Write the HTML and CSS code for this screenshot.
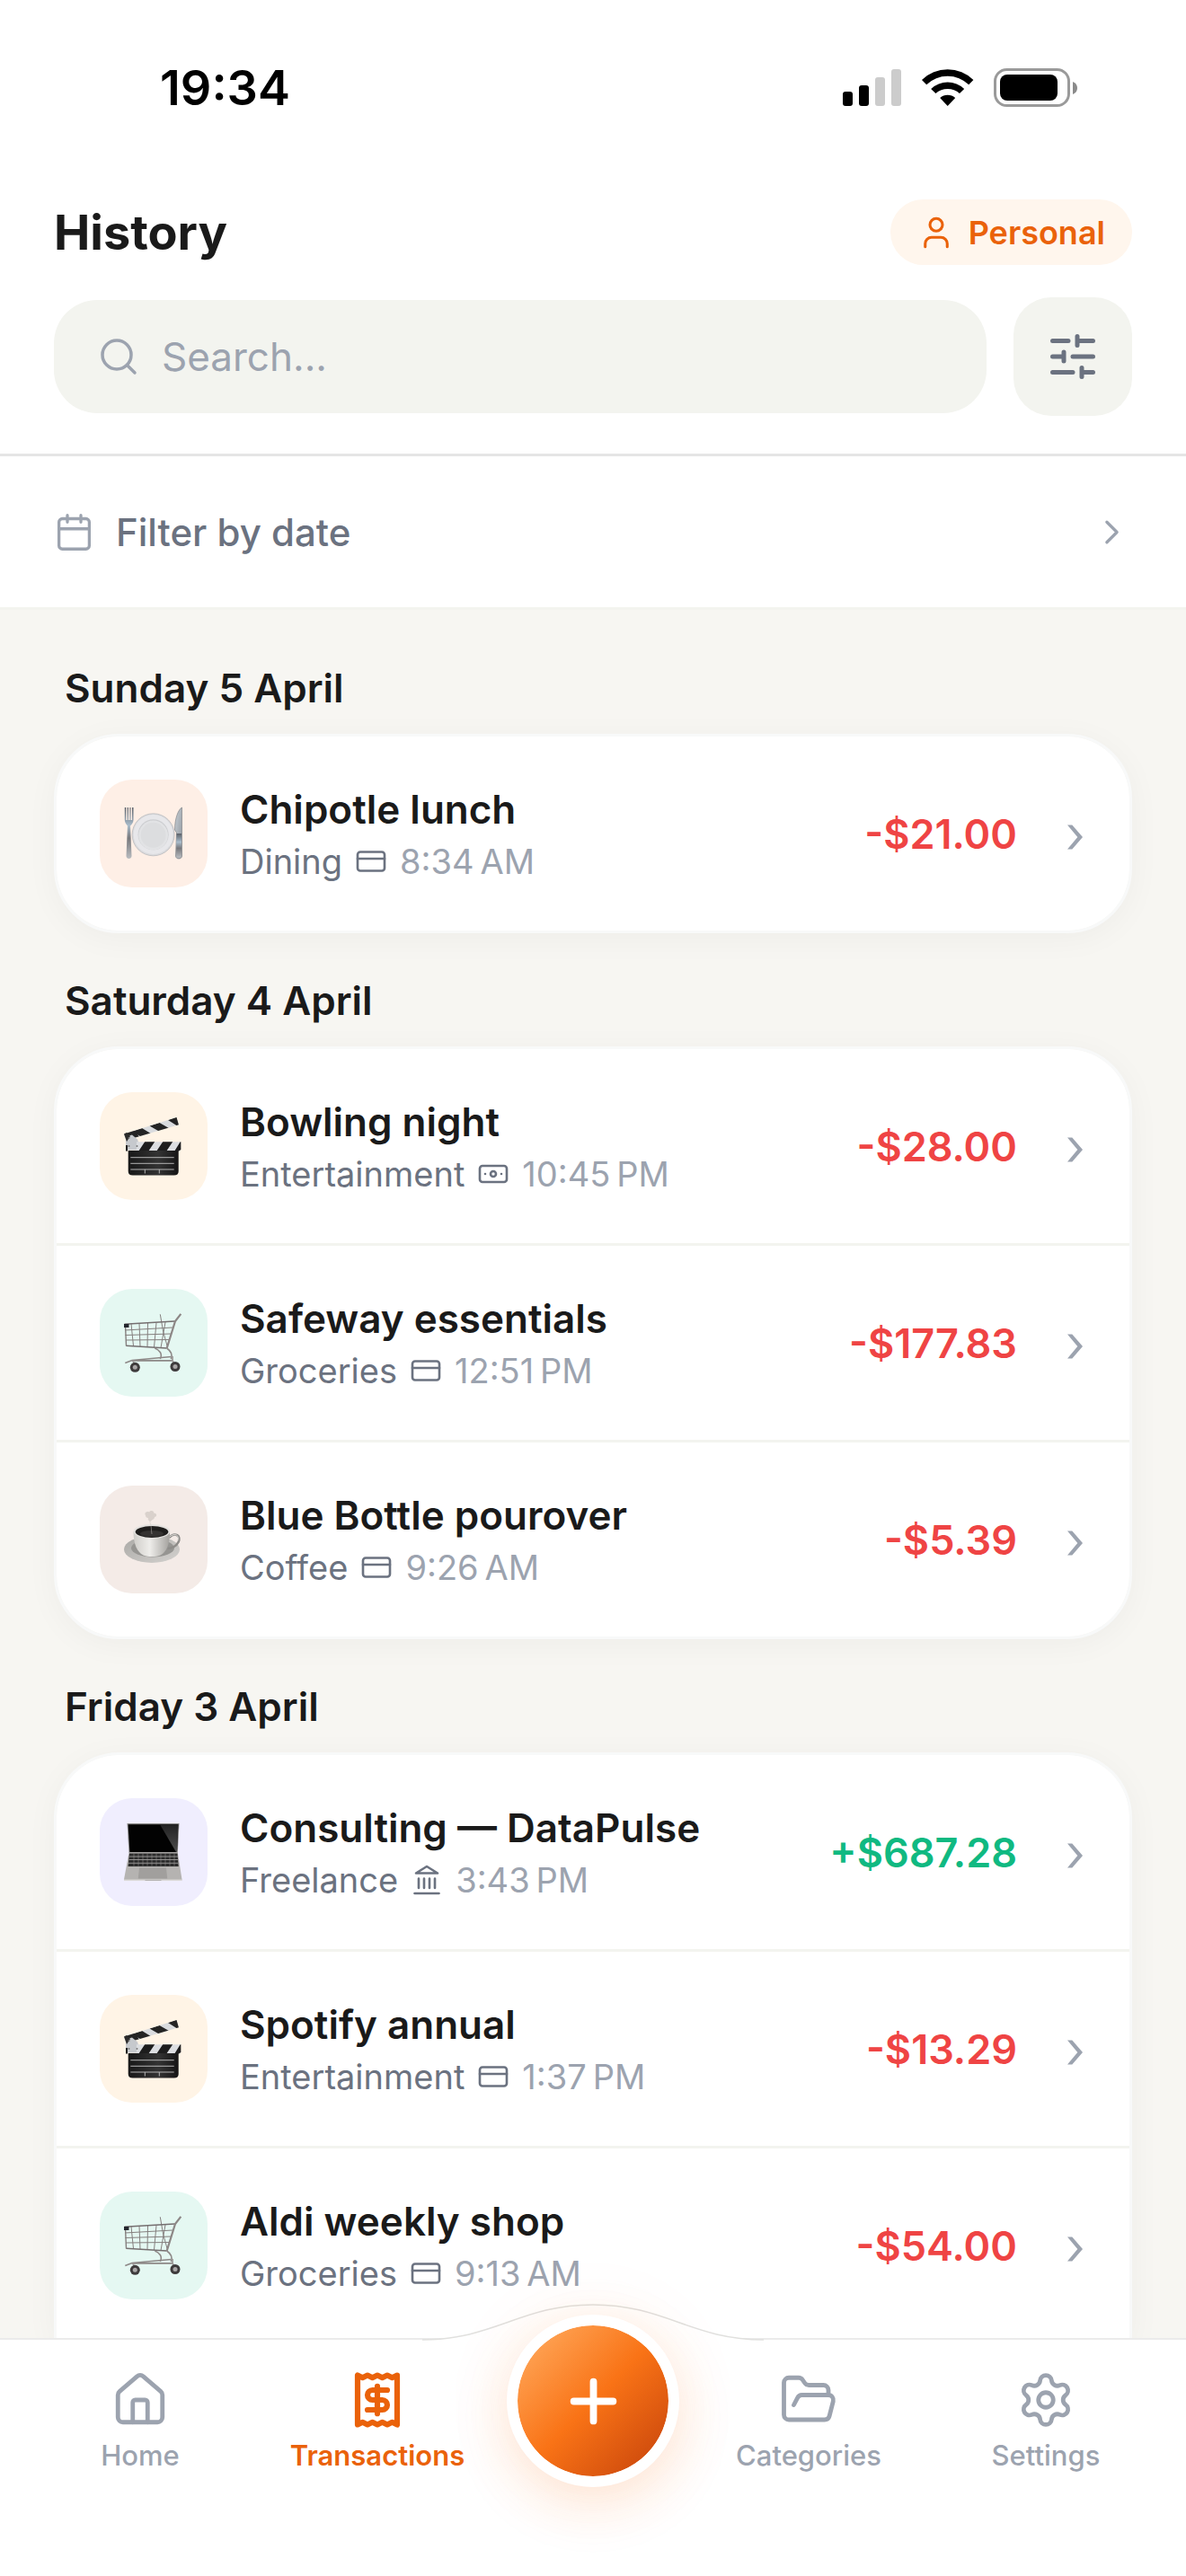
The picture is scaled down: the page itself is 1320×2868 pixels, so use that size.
FILE: index.html
```html
<!DOCTYPE html>
<html lang="en">
<head>
<meta charset="utf-8">
<meta name="viewport" content="width=device-width, initial-scale=1">
<title>History</title>
<link rel="stylesheet" href="styles.css">
</head>
<body>
<svg class="sprite" aria-hidden="true">
  <defs>
    <linearGradient id="steel" x1="0" y1="0" x2="0" y2="1"><stop offset="0" stop-color="#5b6068"/><stop offset=".35" stop-color="#a9bccb"/><stop offset=".6" stop-color="#77787c"/><stop offset="1" stop-color="#b9bcc0"/></linearGradient>
    <linearGradient id="blade" x1="0" y1="0" x2="1" y2="1"><stop offset="0" stop-color="#c9d0d6"/><stop offset="1" stop-color="#8a9199"/></linearGradient>
    <linearGradient id="slate" x1="0" y1="0" x2="1" y2="0"><stop offset="0" stop-color="#181818"/><stop offset=".6" stop-color="#333"/><stop offset="1" stop-color="#151515"/></linearGradient>
    <linearGradient id="cup" x1="0" y1="0" x2="1" y2="0"><stop offset="0" stop-color="#cfcdc9"/><stop offset=".45" stop-color="#eeedea"/><stop offset="1" stop-color="#a3a19d"/></linearGradient>
    <linearGradient id="saucer" x1="0" y1="0" x2="1" y2="1"><stop offset="0" stop-color="#a9a8a5"/><stop offset="1" stop-color="#d4d2cf"/></linearGradient>
    <linearGradient id="glare" x1="0" y1="0" x2="0" y2="1"><stop offset="0" stop-color="#222"/><stop offset="1" stop-color="#4c4c4c"/></linearGradient>
    <clipPath id="arm"><path d="M0 19.500 58.500 1l2.400 8.200L2.500 26.500z"/></clipPath>
    <clipPath id="strip"><path d="M2 28.300h61.300V37L61 38.500H2z"/></clipPath>
  </defs>
  <symbol id="card" viewBox="0 0 24 24"><rect x="2" y="5" width="20" height="14" rx="2"/><path d="M2 10h20"/></symbol>
  <symbol id="cash" viewBox="0 0 24 24"><rect x="2" y="6" width="20" height="12" rx="2"/><circle cx="12" cy="12" r="2"/><path d="M6 12h.01M18 12h.01"/></symbol>
  <symbol id="bank" viewBox="0 0 24 24"><path d="M3 22h18M6 18v-7M10 18v-7M14 18v-7M18 18v-7M12 2l8 5H4z"/></symbol>
  <symbol id="chevron" viewBox="0 0 24 24"><path d="m9 18 6-6-6-6"/></symbol>
  <symbol id="more" viewBox="0 0 21 36"><path d="M0 8.500h5.300L17 22 5.300 35.500H0L11.300 22z"/></symbol>

  <symbol id="dining" viewBox="0 0 66 66">
    <path d="M.8 4v14c0 3 2 5 3.200 6.500L2.500 58c0 4 6 4 6 0L7 24.500c1.500-1.500 3.500-3.500 3.500-6.500V4H9v14H7.500V4H6.400v14H4.900V4H3.700v14H2.300V4z" fill="url(#steel)"/>
    <circle cx="32.600" cy="34.300" r="23.500" fill="#dadbde" stroke="#b5b6b9" stroke-width=".7"/>
    <circle cx="32.600" cy="34" r="22" fill="#e7e7ea"/>
    <circle cx="32.600" cy="34.300" r="17" fill="#cdced1"/>
    <circle cx="32.600" cy="35" r="16.400" fill="#e2e3e5"/>
    <circle cx="32.600" cy="34.800" r="14" fill="#dcdddf"/>
    <path d="M64.500 4c-4 2-8 12-8 25l2 3-1 26c0 4 7 4 7 0z" fill="url(#blade)" stroke="#74787d" stroke-width=".6"/>
    <path d="M58.500 33h5.500v25c0 3-6 3-6 0z" fill="url(#steel)"/>
  </symbol>
  <symbol id="movie" viewBox="0 0 66 66">
    <g clip-path="url(#arm)"><path d="M0 0h66v30H0z" fill="#d9dbde"/><path d="M-2 16l11-3 10 12-11 3zM9 16.500l11-3.500 13 8-11 3.500zM28.500 10.500l11-3.500 13 7.500-11 3.500zM49 4l11-4 8 9-8 2z" fill="#242424"/></g>
    <path d="M2 28v9.500h17l-4-12L9 20.500 3 22z" fill="#c6c9cd"/>
    <path d="M0 19.500 3 18l4 4-4 6z" fill="#2b2b2b"/>
    <g clip-path="url(#strip)"><path d="M14 28h50v11H14z" fill="#dcdee1"/><path d="M24 27h11l-8 12H16zM44 27h11l-8 12H36zM64 26v13h-8zM2 32h2v7H2z" fill="#1d1d1d"/></g>
    <circle cx="5.500" cy="24" r="1" fill="#777"/><circle cx="5.500" cy="33" r="1" fill="#777"/><circle cx="14.500" cy="33" r="1" fill="#777"/>
    <path d="M4.700 38H60.700V61q0 4.600-5 4.600H9.700q-5 0-5-4.600z" fill="url(#slate)"/>
    <path d="M7.300 45.700h48.400M7.300 52.300h48.400M7.300 59h48.400M23.300 59v4.500M39.300 59v4.500" stroke="#b4b4b4" stroke-width="1" fill="none"/>
  </symbol>
  <symbol id="cart" viewBox="0 0 66 66">
    <g fill="none" stroke="#85807f" stroke-width="1">
      <path d="M1 19l53-3M1.400 24.500l51-1.500M2 30l48.500-.5M8 12l2.500 24.500M17 11.500 18 37M26.500 11 26 37.500M36 10.500 33.500 38M46 10 41 38.500M40.300 1.300 43.500 20 48.500 38"/>
      <path d="M.5 12.300 56.300 9M2.300 36.300 47.700 39" stroke="#756f70" stroke-width="1.600"/>
      <path d="M1.500 13 2.500 36.500" stroke-width="1.400"/>
      <path d="M47.700 39 57 9 63.300.9" stroke="#8d8786" stroke-width="2.200"/>
      <path d="M34.300 39c5 2 9 6 6 12M47.700 39c7 5 6 9 4.500 12" stroke="#8f8a89" stroke-width="1.600"/>
      <path d="M1.300 55.500 9 52.500 52.500 48.500M9 52.800H54" stroke="#8d8887" stroke-width="1.700"/>
      <path d="M54 48v5l3 5M10 53l2 5" stroke="#9d9998" stroke-width="1.800"/>
    </g>
    <path d="M0 12h5.500v4H0z" fill="#24262d"/>
    <circle cx="12.300" cy="60.300" r="5.500" fill="#3e3b3c"/><circle cx="12.300" cy="60.300" r="2.500" fill="#a9a6a6"/>
    <circle cx="57" cy="59.500" r="5.500" fill="#3e3b3c"/><circle cx="57" cy="59.500" r="2.500" fill="#a9a6a6"/>
  </symbol>
  <symbol id="coffee" viewBox="0 0 66 66">
    <path d="M24 6c-2-2 1-5 4-3.500 2-3 6-1 5 1 4 0 4 4 1 4.500 0 3-4 3-5 6-1-3-3-2-2-5-2 0-3-1-3-3z" fill="#cdc6c1" opacity=".7"/>
    <ellipse cx="31" cy="44" rx="31" ry="15" fill="url(#saucer)"/>
    <ellipse cx="32" cy="42.500" rx="24" ry="10" fill="#969592"/>
    <path d="M50 31c7-7 14-2 10.500 5-2 4-7 7-12 7" fill="none" stroke="#8e8c89" stroke-width="2.600"/>
    <path d="M50 30.500c7-6 12.500-2 9.500 4.500" fill="none" stroke="#dddbd8" stroke-width="1"/>
    <path d="M10.500 24c0 14 4 23 11 26.500 5 2 14 2 19 0C47.500 47 51 38 51 24z" fill="url(#cup)"/>
    <ellipse cx="31" cy="24" rx="20.300" ry="8" fill="#e4e2df"/>
    <ellipse cx="31" cy="24.500" rx="18.300" ry="6.500" fill="#1f1e1d"/>
    <ellipse cx="31" cy="26.500" rx="13" ry="3.500" fill="#343231"/>
    <path d="M29 14c2 5 1 8 2 13" fill="none" stroke="#cdc6c1" stroke-width=".8" opacity=".6"/>
  </symbol>
  <symbol id="laptop" viewBox="0 0 66 66">
    <path d="M3.500 1h58L59.800 34H5.500z" fill="#8e8d8c"/>
    <path d="M4.600 2.200h55.800L59 33H6.400z" fill="#020202"/>
    <path d="M40 2.200h20.400L59 33h-1z" fill="url(#glare)"/>
    <path d="M5.500 33.500h54.300L64.500 63.500q0 1.500-1.500 1.500H1.500Q0 65 0 63.500z" fill="#b5b3b1"/>
    <path d="M6 34.500h53.500l1.200 14.500H4.500z" fill="#2b2b2b"/>
    <path d="M6 38h54M5.500 41.500h54.500M5 45.300h55.500" stroke="#9c9b9a" stroke-width=".9"/>
    <path d="M11 34.500v14M16 34.500v14M21 34.500v14M26 34.500v14M31 34.500v14M36 34.500v14M41 34.500v14M46 34.500v14M51 34.500v14M56 34.500v14" stroke="#9c9b9a" stroke-width=".5"/>
    <path d="M17 50.500h30l1.200 12H15.800z" fill="#a19f9d"/>
    <path d="M0 63.500h64.500v1.500H42l-1-1H24l-1 1H0z" fill="#dcdad8"/>
  </symbol>
</svg>

<div class="app">
  <div class="status">
    <time class="clock">19:34</time>
    <svg class="signals" viewBox="0 0 262 44" aria-hidden="true">
      <rect y="26" width="11" height="16" rx="3"/><rect x="18" y="19" width="11" height="23" rx="3"/>
      <rect x="36" y="10" width="11" height="32" rx="3" fill="#ccc"/><rect x="54" y="1" width="11" height="41" rx="3" fill="#ccc"/>
      <path d="M88 13a41 41 0 0 1 57.400 0l-5.200 5.200a34 34 0 0 0-47 0zM98.200 22.900a27 27 0 0 1 37 0l-5.200 5.200a20 20 0 0 0-26.600 0zM108.200 33a13 13 0 0 1 17 0l-8.500 9z"/>
      <rect x="169.500" y="1.500" width="82" height="40" rx="13" fill="none" stroke="#9a9a9a" stroke-width="3"/>
      <rect x="175" y="7" width="64" height="29" rx="8"/>
      <path d="M256 15q5 2 5 7t-5 7z" fill="#8a8a8a"/>
    </svg>
  </div>

  <header class="header">
    <div class="title-row">
      <h1>History</h1>
      <button class="pill" type="button">
        <svg class="icon" viewBox="0 0 24 24"><path d="M19 21v-2a4 4 0 0 0-4-4H9a4 4 0 0 0-4 4v2"/><circle cx="12" cy="7" r="4"/></svg>
        Personal
      </button>
    </div>
    <div class="search-row">
      <label class="search">
        <svg class="icon" viewBox="0 0 24 24" aria-hidden="true"><circle cx="11" cy="11" r="8"/><path d="m21 21-4.300-4.300"/></svg>
        <input type="text" placeholder="Search..." aria-label="Search">
      </label>
      <button class="sliders" type="button" aria-label="Filters">
        <svg class="icon" viewBox="0 0 24 24"><path d="M10 5H3M12 19H3M14 3v4M16 17v4M21 12h-9M21 19h-5M21 5h-7M8 10v4M8 12H3"/></svg>
      </button>
    </div>
  </header>

  <button class="date-filter" type="button">
    <svg class="icon" viewBox="0 0 24 24"><path d="M8 2v4M16 2v4M3 10h18"/><rect x="3" y="4" width="18" height="18" rx="2"/></svg>
    <span>Filter by date</span>
    <svg class="icon"><use href="#chevron"/></svg>
  </button>

  <main class="list">
    <section class="day">
      <h2>Sunday 5 April</h2>
      <div class="group">
        <a class="row" href="#">
          <span class="tile peach"><svg><use href="#dining"/></svg></span>
          <span class="info"><span class="name">Chipotle lunch</span><span class="meta">Dining <svg class="icon"><use href="#card"/></svg> <time>8:34&#8239;AM</time></span></span>
          <span class="amount">-$21.00</span><svg class="go"><use href="#more"/></svg>
        </a>
      </div>
    </section>

    <section class="day">
      <h2>Saturday 4 April</h2>
      <div class="group">
        <a class="row" href="#">
          <span class="tile cream"><svg><use href="#movie"/></svg></span>
          <span class="info"><span class="name">Bowling night</span><span class="meta">Entertainment <svg class="icon"><use href="#cash"/></svg> <time>10:45&#8239;PM</time></span></span>
          <span class="amount">-$28.00</span><svg class="go"><use href="#more"/></svg>
        </a>
        <a class="row" href="#">
          <span class="tile mint"><svg><use href="#cart"/></svg></span>
          <span class="info"><span class="name">Safeway essentials</span><span class="meta">Groceries <svg class="icon"><use href="#card"/></svg> <time>12:51&#8239;PM</time></span></span>
          <span class="amount">-$177.83</span><svg class="go"><use href="#more"/></svg>
        </a>
        <a class="row" href="#">
          <span class="tile mocha"><svg><use href="#coffee"/></svg></span>
          <span class="info"><span class="name">Blue Bottle pourover</span><span class="meta">Coffee <svg class="icon"><use href="#card"/></svg> <time>9:26&#8239;AM</time></span></span>
          <span class="amount">-$5.39</span><svg class="go"><use href="#more"/></svg>
        </a>
      </div>
    </section>

    <section class="day">
      <h2>Friday 3 April</h2>
      <div class="group continued">
        <a class="row" href="#">
          <span class="tile lilac"><svg><use href="#laptop"/></svg></span>
          <span class="info"><span class="name">Consulting — DataPulse</span><span class="meta">Freelance <svg class="icon"><use href="#bank"/></svg> <time>3:43&#8239;PM</time></span></span>
          <span class="amount income">+$687.28</span><svg class="go"><use href="#more"/></svg>
        </a>
        <a class="row" href="#">
          <span class="tile cream"><svg><use href="#movie"/></svg></span>
          <span class="info"><span class="name">Spotify annual</span><span class="meta">Entertainment <svg class="icon"><use href="#card"/></svg> <time>1:37&#8239;PM</time></span></span>
          <span class="amount">-$13.29</span><svg class="go"><use href="#more"/></svg>
        </a>
        <a class="row" href="#">
          <span class="tile mint"><svg><use href="#cart"/></svg></span>
          <span class="info"><span class="name">Aldi weekly shop</span><span class="meta">Groceries <svg class="icon"><use href="#card"/></svg> <time>9:13&#8239;AM</time></span></span>
          <span class="amount">-$54.00</span><svg class="go"><use href="#more"/></svg>
        </a>
      </div>
    </section>
  </main>

  <nav class="tabs">
    <svg class="bump" viewBox="0 0 380 42" aria-hidden="true"><path d="M0 40C80 40 110 1 190 1s110 39 190 39v2H0z" fill="#fff"/><path d="M0 40C80 40 110 1 190 1s110 39 190 39" fill="none" stroke="#e0e0de" stroke-width="1.500"/></svg>
    <a class="tab" href="#">
      <svg class="icon" viewBox="0 0 24 24"><path d="M15 21v-8a1 1 0 0 0-1-1h-4a1 1 0 0 0-1 1v8"/><path d="M3 10a2 2 0 0 1 .709-1.528l7-5.999a2 2 0 0 1 2.582 0l7 5.999A2 2 0 0 1 21 10v9a2 2 0 0 1-2 2H5a2 2 0 0 1-2-2z"/></svg>
      Home
    </a>
    <a class="tab active" href="#" aria-current="page">
      <svg class="icon" viewBox="0 0 24 24"><path d="M4 2v20l2-1 2 1 2-1 2 1 2-1 2 1 2-1 2 1V2l-2 1-2-1-2 1-2-1-2 1-2-1-2 1Z"/><path d="M16 8h-6a2 2 0 1 0 0 4h4a2 2 0 1 1 0 4H8M12 17.500v-11"/></svg>
      Transactions
    </a>
    <div class="fab-slot">
      <button class="fab" type="button" aria-label="Add transaction"><svg class="icon" viewBox="0 0 24 24"><path d="M5 12h14M12 5v14"/></svg></button>
    </div>
    <a class="tab" href="#">
      <svg class="icon" viewBox="0 0 24 24"><path d="m6 14 1.500-2.900A2 2 0 0 1 9.240 10H20a2 2 0 0 1 1.940 2.500l-1.540 6a2 2 0 0 1-1.950 1.500H4a2 2 0 0 1-2-2V5a2 2 0 0 1 2-2h3.900a2 2 0 0 1 1.690.9l.81 1.200a2 2 0 0 0 1.670.9H18a2 2 0 0 1 2 2v2"/></svg>
      Categories
    </a>
    <a class="tab" href="#">
      <svg class="icon" viewBox="0 0 24 24"><path d="M9.671 4.136a2.340 2.340 0 0 1 4.659 0 2.340 2.340 0 0 0 3.319 1.915 2.340 2.340 0 0 1 2.330 4.033 2.340 2.340 0 0 0 0 3.831 2.340 2.340 0 0 1-2.330 4.033 2.340 2.340 0 0 0-3.319 1.915 2.340 2.340 0 0 1-4.659 0 2.340 2.340 0 0 0-3.320-1.915 2.340 2.340 0 0 1-2.330-4.033 2.340 2.340 0 0 0 0-3.831A2.340 2.340 0 0 1 6.350 6.051a2.340 2.340 0 0 0 3.319-1.915"/><circle cx="12" cy="12" r="3"/></svg>
      Settings
    </a>
  </nav>
</div>
</body>
</html>
```
FILE: styles.css
```css
:root {
  --ink: #1a1a1a;
  --muted: #6b7280;
  --faint: #9ca3af;
  --orange: #ea620a;
  --field: #f3f4ef;
  --line: #f3f4ef;
}

* { box-sizing: border-box; }

body {
  margin: 0;
  background: #fff;
  color: var(--ink);
  font-family: Inter, "Liberation Sans", sans-serif;
  font-size: 44px;
}

button, input { font: inherit; color: inherit; border: 0; background: none; padding: 0; margin: 0; }
a { color: inherit; text-decoration: none; }
h1, h2 { margin: 0; font-weight: 600; }

.sprite { position: absolute; width: 0; height: 0; }

.icon {
  flex: none;
  fill: none;
  stroke: currentColor;
  stroke-width: 1.750;
  stroke-linecap: round;
  stroke-linejoin: round;
}

.app { display: flex; flex-direction: column; height: 100vh; }

/* Status bar */
.status {
  flex: none;
  display: flex;
  align-items: center;
  justify-content: space-between;
  height: 177px;
  padding: 18px 120px 0 178px;
  color: #000;
}
.clock { font-size: 54px; font-weight: 600; }
.signals { width: 262px; height: 44px; }

/* Header */
.header {
  flex: none;
  display: flex;
  flex-direction: column;
  gap: 36px;
  padding: 45px 60px 42px;
  border-bottom: 3px solid #e5e5e5;
}
.title-row { display: flex; align-items: center; justify-content: space-between; height: 73px; }
h1 { font-size: 54px; font-weight: 700; }
.pill {
  display: flex;
  align-items: center;
  gap: 15px;
  height: 73px;
  padding: 0 30px;
  border-radius: 37px;
  background: #fff6ed;
  color: var(--orange);
  font-size: 36px;
  font-weight: 600;
}
.pill .icon { width: 42px; height: 42px; }

.search-row { display: flex; align-items: center; gap: 30px; }
.search {
  flex: 1;
  display: flex;
  align-items: center;
  gap: 24px;
  height: 126px;
  padding: 0 48px;
  border-radius: 48px;
  background: var(--field);
  color: var(--faint);
}
.search .icon { width: 48px; height: 48px; }
.search input { flex: 1; min-width: 0; outline: 0; }
.search input::placeholder { color: var(--faint); opacity: 1; }
.sliders {
  display: grid;
  place-items: center;
  width: 132px;
  height: 132px;
  border-radius: 42px;
  background: var(--field);
  color: var(--muted);
}
.sliders .icon { width: 60px; height: 60px; stroke-width: 2; }

.date-filter {
  flex: none;
  display: flex;
  align-items: center;
  gap: 24px;
  height: 171px;
  padding: 0 60px;
  border-bottom: 3px solid var(--line);
  color: var(--faint);
}
.date-filter span { flex: 1; text-align: left; color: var(--muted); font-size: 42px; font-weight: 500; }
.date-filter .icon { width: 45px; height: 45px; }

/* Transactions */
.list {
  flex: 1;
  min-height: 0;
  display: flex;
  flex-direction: column;
  gap: 48px;
  padding: 60px 60px 0;
  overflow: hidden;
  background: #f7f6f2;
}
.day { flex: none; }
h2 { padding: 0 12px; margin-bottom: 24px; font-size: 44px; line-height: 54px; }
.group {
  border: 3px solid #f8f9f9;
  border-radius: 72px;
  background: #fff;
  background-clip: padding-box;
  box-shadow: 0 6px 36px rgba(0, 0, 0, .04);
}
/* The day whose rows run on under the tab bar */
.continued { border-bottom: 0; border-radius: 72px 72px 0 0; }
.row { display: flex; align-items: center; gap: 36px; height: 216px; padding: 0 48px; }
.row + .row { height: 219px; border-top: 3px solid var(--line); }
.tile { flex: none; display: grid; place-items: center; width: 120px; height: 120px; border-radius: 36px; }
.tile svg { width: 66px; height: 66px; }
.peach { background: #feefe6; }
.cream { background: #fff4e6; }
.mint { background: #e5f8f2; }
.mocha { background: #f4ebe7; }
.lilac { background: #f0eefe; }

.info { flex: 1; display: flex; flex-direction: column; gap: 3px; padding-top: 3px; }
.name { font-weight: 600; line-height: 56px; }
.meta { display: flex; align-items: center; gap: 14px; color: var(--muted); font-size: 38px; line-height: 54px; }
.meta .icon { width: 36px; height: 36px; }
.meta time { color: var(--faint); }
.amount { margin-right: 20px; color: #ef4444; font-size: 45px; font-weight: 600; }
.income { color: #10b981; }
.go { flex: none; width: 21px; height: 36px; fill: var(--faint); }

/* Tab bar */
.tabs {
  position: relative;
  flex: none;
  display: flex;
  height: 265px;
  padding: 34px 24px 0;
  border-top: 2px solid #ebebeb;
  background: #fff;
}
.bump { position: absolute; left: 50%; bottom: 100%; width: 380px; height: 42px; margin: 0 0 -2px -190px; }
.tab {
  flex: 1;
  display: flex;
  flex-direction: column;
  align-items: center;
  gap: 10px;
  color: var(--faint);
  font-size: 31px;
  font-weight: 500;
  line-height: 38px;
}
.tab .icon { width: 66px; height: 66px; }
.active { color: var(--orange); font-weight: 600; }
.active .icon { stroke-width: 2.250; }
.fab-slot { position: relative; width: 216px; }
.fab {
  position: absolute;
  left: 12px;
  top: -62px;
  display: grid;
  place-items: center;
  width: 192px;
  height: 192px;
  border: 12px solid #fff;
  border-radius: 50%;
  background: linear-gradient(135deg, #ffa95c 5%, #f97316 50%, #c9460c 95%) padding-box, #fff;
  box-shadow: 0 18px 60px rgba(249, 115, 22, .17), 0 0 90px rgba(249, 115, 22, .06);
  color: #fff;
}
.fab .icon { width: 75px; height: 75px; stroke-width: 2.500; }
```
